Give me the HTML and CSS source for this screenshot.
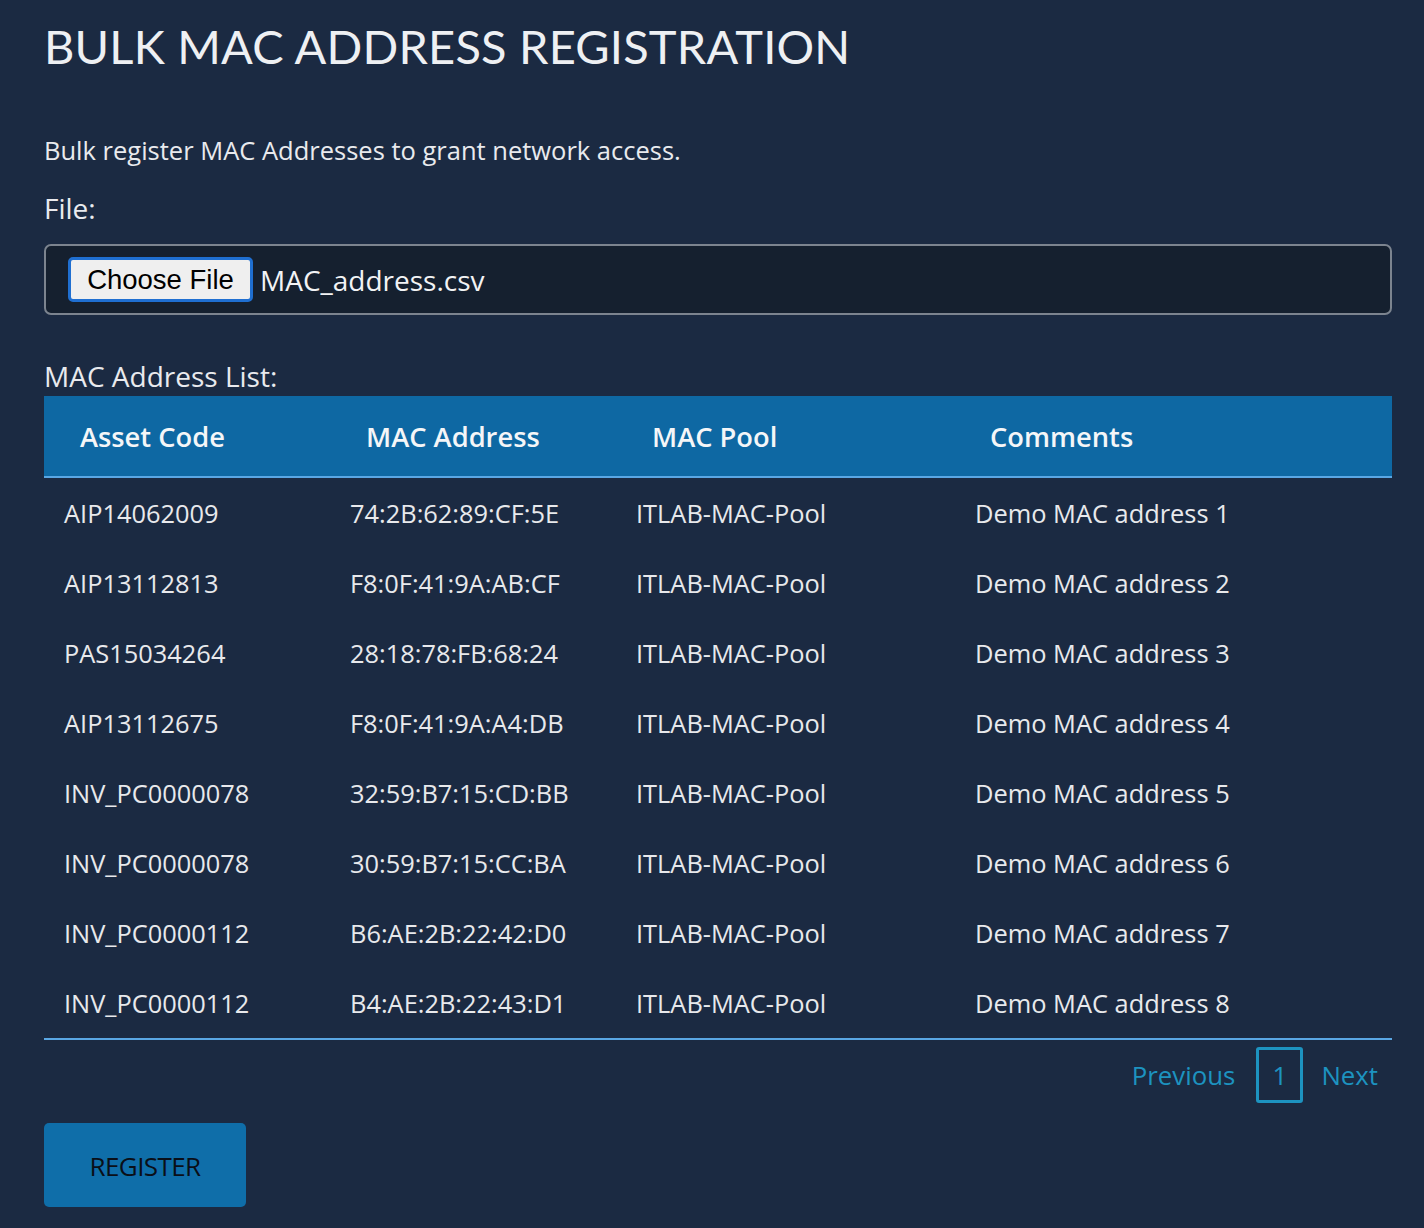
FILE: index.html
```html
<!DOCTYPE html>
<html lang="en">
<head>
<meta charset="utf-8">
<title>Bulk MAC Address Registration</title>
<link rel="stylesheet" href="styles.css">
</head>
<body>
<main class="page">
  <h1 class="title">BULK MAC ADDRESS REGISTRATION</h1>
  <p class="intro">Bulk register MAC Addresses to grant network access.</p>
  <label class="label">File:</label>
  <div class="file-box">
    <span class="file-btn">Choose File</span>
    <span class="file-name">MAC_address.csv</span>
  </div>
  <div class="label list-label">MAC Address List:</div>
  <table class="mac-table">
    <colgroup>
      <col class="c1"><col class="c2"><col class="c3"><col class="c4">
    </colgroup>
    <thead>
      <tr><th>Asset Code</th><th>MAC Address</th><th>MAC Pool</th><th>Comments</th></tr>
    </thead>
    <tbody>
      <tr><td>AIP14062009</td><td>74:2B:62:89:CF:5E</td><td>ITLAB-MAC-Pool</td><td>Demo MAC address 1</td></tr>
      <tr><td>AIP13112813</td><td>F8:0F:41:9A:AB:CF</td><td>ITLAB-MAC-Pool</td><td>Demo MAC address 2</td></tr>
      <tr><td>PAS15034264</td><td>28:18:78:FB:68:24</td><td>ITLAB-MAC-Pool</td><td>Demo MAC address 3</td></tr>
      <tr><td>AIP13112675</td><td>F8:0F:41:9A:A4:DB</td><td>ITLAB-MAC-Pool</td><td>Demo MAC address 4</td></tr>
      <tr><td>INV_PC0000078</td><td>32:59:B7:15:CD:BB</td><td>ITLAB-MAC-Pool</td><td>Demo MAC address 5</td></tr>
      <tr><td>INV_PC0000078</td><td>30:59:B7:15:CC:BA</td><td>ITLAB-MAC-Pool</td><td>Demo MAC address 6</td></tr>
      <tr><td>INV_PC0000112</td><td>B6:AE:2B:22:42:D0</td><td>ITLAB-MAC-Pool</td><td>Demo MAC address 7</td></tr>
      <tr><td>INV_PC0000112</td><td>B4:AE:2B:22:43:D1</td><td>ITLAB-MAC-Pool</td><td>Demo MAC address 8</td></tr>
    </tbody>
  </table>
  <nav class="pager">
    <a class="pager-link">Previous</a>
    <span class="pager-page">1</span>
    <a class="pager-link">Next</a>
  </nav>
  <button class="register">REGISTER</button>
</main>
</body>
</html>
```

FILE: styles.css
```css
html, body {
  margin: 0;
  padding: 0;
  background: #1b2a42;
}
body {
  font-family: "Open Sans", "Noto Sans", sans-serif;
  color: #e9eaee;
}
.page {
  padding: 14px 32px 20px 44px;
  display: flex;
  flex-direction: column;
  align-items: flex-start;
}
.title {
  font-family: Lato, "Open Sans", sans-serif;
  font-weight: 400;
  font-size: 47px;
  line-height: 64px;
  margin: 0;
  color: #eef0f3;
  letter-spacing: 0.2px;
}
.intro {
  font-size: 25.5px;
  line-height: 34px;
  margin: 55px 0 0 0;
}
.label {
  font-size: 28px;
  line-height: 34px;
  display: block;
}
.intro + .label { margin-top: 24px; }
.file-box {
  align-self: stretch;
  margin-top: 19px;
  height: 67px;
  border: 2px solid #7c848f;
  border-radius: 7px;
  background: #15202f;
  display: flex;
  align-items: center;
  padding-left: 22px;
  gap: 7px;
}
.file-btn {
  font-family: "Liberation Sans", Arial, sans-serif;
  font-size: 27.5px;
  color: #000;
  background: #efefef;
  border: 3px solid #1f6fd1;
  border-radius: 5px;
  height: 45px;
  box-sizing: border-box;
  width: 185px;
  display: flex;
  align-items: center;
  justify-content: center;
}
.file-name {
  font-size: 28px;
  color: #f2f3f5;
}
.list-label { margin-top: 44px; }
.mac-table {
  align-self: stretch;
  margin-top: 3px;
  border-collapse: collapse;
  table-layout: fixed;
  width: 100%;
  border-bottom: 2px solid #5aa7e4;
}
.c1 { width: 286px; }
.c2 { width: 286px; }
.c3 { width: 339px; }
.mac-table th {
  background: #0e68a3;
  color: #f4f6f8;
  font-weight: 600;
  font-size: 27.3px;
  text-align: left;
  height: 80px;
  padding: 0 0 0 36px;
  border-bottom: 2px solid #5aa7e4;
}
.mac-table td {
  font-size: 25.4px;
  height: 70px;
  padding: 0 0 0 20px;
  color: #e8e9ec;
}
.mac-table th:nth-child(4) { padding-left: 35px; }
.pager {
  align-self: flex-end;
  display: flex;
  align-items: center;
  margin-top: 7px;
  margin-right: 14px;
}
.pager-link {
  color: #1d93c0;
  font-size: 25.8px;
}
.pager-page {
  color: #1d93c0;
  font-size: 25.8px;
  width: 47px;
  height: 56px;
  box-sizing: border-box;
  border: 3px solid #1d93c0;
  border-radius: 3px;
  display: flex;
  align-items: center;
  justify-content: center;
  margin: 0 18px 0 21px;
}
.register {
  margin-top: 20px;
  width: 202px;
  height: 84px;
  border: none;
  border-radius: 5px;
  background: #0f6ea9;
  color: #0a0f18;
  font-family: "Open Sans", "Noto Sans", sans-serif;
  font-size: 26px;
  letter-spacing: -0.6px;
  padding: 2px 0 0 0;
}
```
